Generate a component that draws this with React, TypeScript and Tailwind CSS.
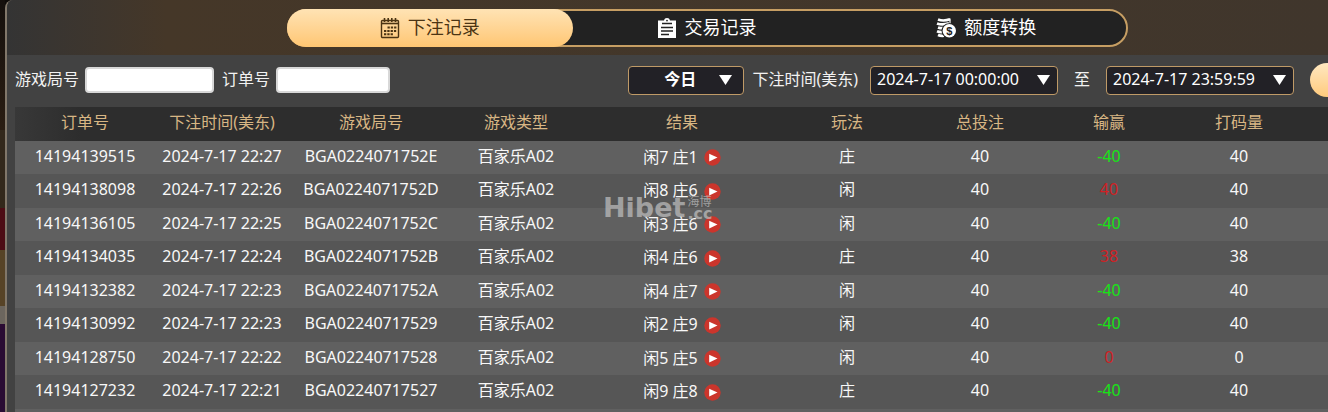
import * as React from "react"
import { clsx } from "clsx"

interface Bet {
  order: string
  time: string
  round: string
  result: string
  play: string
  stake: number
  win: number
  turnover: number
}

const bets: Bet[] = [
  { order: "14194139515", time: "2024-7-17 22:27", round: "BGA0224071752E", result: "闲7 庄1", play: "庄", stake: 40, win: -40, turnover: 40 },
  { order: "14194138098", time: "2024-7-17 22:26", round: "BGA0224071752D", result: "闲8 庄6", play: "闲", stake: 40, win: 40, turnover: 40 },
  { order: "14194136105", time: "2024-7-17 22:25", round: "BGA0224071752C", result: "闲3 庄6", play: "闲", stake: 40, win: -40, turnover: 40 },
  { order: "14194134035", time: "2024-7-17 22:24", round: "BGA0224071752B", result: "闲4 庄6", play: "庄", stake: 40, win: 38, turnover: 38 },
  { order: "14194132382", time: "2024-7-17 22:23", round: "BGA0224071752A", result: "闲4 庄7", play: "闲", stake: 40, win: -40, turnover: 40 },
  { order: "14194130992", time: "2024-7-17 22:23", round: "BGA02240717529", result: "闲2 庄9", play: "闲", stake: 40, win: -40, turnover: 40 },
  { order: "14194128750", time: "2024-7-17 22:22", round: "BGA02240717528", result: "闲5 庄5", play: "闲", stake: 40, win: 0, turnover: 0 },
  { order: "14194127232", time: "2024-7-17 22:21", round: "BGA02240717527", result: "闲9 庄8", play: "庄", stake: 40, win: -40, turnover: 40 },
]

const columns = [
  { title: "订单号", width: "w-[140px]" },
  { title: "下注时间(美东)", width: "w-[134px]" },
  { title: "游戏局号", width: "w-[164px]" },
  { title: "游戏类型", width: "w-[126px]" },
  { title: "结果", width: "w-[206px]" },
  { title: "玩法", width: "w-[124px]" },
  { title: "总投注", width: "w-[142px]" },
  { title: "输赢", width: "w-[116px]" },
  { title: "打码量", width: "w-[161px]" },
]

function CalendarIcon() {
  return (
    <svg width="20" height="22" viewBox="0 0 20 22" fill="none" aria-hidden="true">
      <rect x="1.5" y="3.5" width="17" height="17" rx="1" stroke="currentColor" strokeWidth="1.4" />
      <path d="M2 6.500h16" stroke="currentColor" strokeWidth="1.600" />
      <path d="M4.500 1v4M8.200 1v4M11.800 1v4M15.500 1v4" stroke="currentColor" strokeWidth="1.600" />
      <path d="M7.500 10.500H17M4 14h13M4 17.300h9" stroke="currentColor" strokeWidth="2" strokeDasharray="2.300 1" />
    </svg>
  )
}

function ClipboardIcon() {
  return (
    <svg width="20" height="22" viewBox="0 0 20 22" aria-hidden="true">
      <path d="M1 3.500h6C7.300 1.800 8.500 1 10 1s2.700.8 3 2.500h6V21H1z" fill="currentColor" />
      <circle cx="10" cy="3.600" r="0.900" fill="#222" />
      <path d="M5 6.500h10M4 10.500h12M4 14h12M4 17.500h8" stroke="#222" strokeWidth="1.600" />
    </svg>
  )
}

function CoinsIcon() {
  return (
    <svg width="20" height="22" viewBox="0 0 20 22" aria-hidden="true">
      <g fill="none" stroke="currentColor" strokeWidth="2.700">
        <path d="M2 2.500c3 1.200 8 1.200 12-.2" />
        <path d="M1 6.400c3 1.200 8 1.200 12-.2" />
        <path d="M2 10.400c2 .8 4 1 7 .7" />
        <path d="M1 14.200c2 .9 4 1 6 .8" />
        <path d="M2 17.900c2 .9 4 1 6 .8" />
      </g>
      <path d="M14 1.500v5" stroke="currentColor" strokeWidth="1.200" />
      <circle cx="13" cy="13.800" r="7.500" fill="#222" />
      <circle cx="13.300" cy="13.800" r="6.700" fill="currentColor" />
      <text x="13.300" y="17.900" textAnchor="middle" fontSize="11" fontWeight="700" fill="#222" fontFamily="Liberation Sans, sans-serif">
        $
      </text>
    </svg>
  )
}

function Tab({ icon, label, active }: { icon: React.ReactNode; label: string; active?: boolean }) {
  return (
    <button
      type="button"
      role="tab"
      aria-selected={!!active}
      className={clsx(
        "flex h-full items-center justify-center gap-2 rounded-full text-lg",
        active
          ? "w-[calc(100%+6px)] shrink-0 bg-linear-to-b from-[#ffe3b4] to-[#ffc672] text-[#4b3413]"
          : "flex-1 text-white"
      )}
    >
      {icon}
      <span className="pb-0.5 leading-6">{label}</span>
    </button>
  )
}

interface PickerProps {
  label: string
  value: string
  className?: string
  selectClassName?: string
  arrowClassName?: string
}

function Picker({ label, value, className, selectClassName, arrowClassName = "right-2" }: PickerProps) {
  return (
    <span className={clsx("relative block", className)}>
      <select
        aria-label={label}
        className={clsx(
          "block h-[29px] w-full appearance-none rounded-sm border border-[#bf9a67] bg-[#222126] pb-0.5 text-base leading-6 text-white",
          selectClassName
        )}
      >
        <option>{value}</option>
      </select>
      <svg
        className={clsx("pointer-events-none absolute top-[9px]", arrowClassName)}
        width="13"
        height="10"
        viewBox="0 0 13 10"
        aria-hidden="true"
      >
        <path d="M0 0h13L6.500 10z" fill="#fff" />
      </svg>
    </span>
  )
}

function PlayButton({ order }: { order: string }) {
  return (
    <button type="button" aria-label={`回放 ${order}`} className="shrink-0 pt-0.5">
      <svg width="17" height="17" viewBox="0 0 17 17" aria-hidden="true">
        <circle cx="8.500" cy="8.500" r="8.200" fill="#cb352c" />
        <path d="M5.200 4.700l8.300 3.900-8.300 3.900z" fill="#fff" />
      </svg>
    </button>
  )
}

function Watermark() {
  return (
    <div
      aria-hidden="true"
      className="pointer-events-none absolute top-[89px] left-[588px] flex items-end gap-0.5 text-[#c8c8c8] opacity-65"
    >
      <span className="font-['DejaVu_Sans'] text-[27px] leading-6 font-bold">Hibet</span>
      <span className="flex flex-col">
        <span className="font-['Liberation_Sans','Noto_Sans_CJK_SC',sans-serif] text-xs leading-3">海博</span>
        <span className="font-['DejaVu_Sans'] text-base leading-3 font-bold">.cc</span>
      </span>
    </div>
  )
}

function BetTable() {
  return (
    <table className="w-full table-fixed border-collapse text-center text-base leading-6">
      <thead>
        <tr className="h-[34px] bg-linear-to-r from-[#383838] to-[#2d2d2d] to-5% text-[#d8b684]">
          {columns.map((col) => (
            <th key={col.title} scope="col" className={clsx("pb-1 font-normal last:pr-[17px]", col.width)}>
              {col.title}
            </th>
          ))}
        </tr>
      </thead>
      <tbody className="text-[#f8f8f8]">
        {bets.map((bet) => (
          <tr key={bet.order} className="h-[33px] bg-[#606060] even:h-[34px] even:bg-[#565656] *:pb-1">
            <td>{bet.order}</td>
            <td>{bet.time}</td>
            <td>{bet.round}</td>
            <td>百家乐A02</td>
            <td>
              <div className="flex items-center justify-center gap-1.5 pt-0.5">
                <span>{bet.result}</span>
                <PlayButton order={bet.order} />
              </div>
            </td>
            <td>{bet.play}</td>
            <td>{bet.stake}</td>
            <td className={bet.win < 0 ? "text-[#16e516]" : "text-[#d01f24]"}>{bet.win}</td>
            <td className="pr-[17px]">{bet.turnover}</td>
          </tr>
        ))}
      </tbody>
    </table>
  )
}

export default function App() {
  return (
    <div className="flex min-h-screen overflow-hidden bg-[#0e0b09] font-['Noto_Sans','Noto_Sans_CJK_SC',sans-serif]">
      {/* table felt showing beside the panel */}
      <div className="flex w-[5px] shrink-0 flex-col">
        <div className="h-[130px] bg-linear-to-b from-[#15100d] to-[#2a1d12]" />
        <div className="h-[78px] bg-[#33281b]" />
        <div className="h-[42px] bg-[#4d0c14]" />
        <div className="h-[56px] bg-[#574326]" />
        <div className="h-[18px] bg-[#6c665e]" />
        <div className="flex-1 bg-[#2a0b33]" />
      </div>
      <main className="flex min-w-0 flex-1 flex-col overflow-hidden rounded-tl-lg border-l-2 border-[#81776a] bg-[#424242]">
        <header className="bg-linear-to-r from-[#343434] via-[#453728] via-12% to-[#40362c] pt-[9px] pr-[200px] pb-2 pl-[280px]">
          <div role="tablist" className="flex h-[38px] rounded-full border-2 border-[#c69e63] bg-[#222]">
            <div className="-my-0.5 -ml-0.5 flex min-w-0 flex-1">
              <Tab active icon={<CalendarIcon />} label="下注记录" />
            </div>
            <Tab icon={<ClipboardIcon />} label="交易记录" />
            <Tab icon={<CoinsIcon />} label="额度转换" />
          </div>
        </header>

        <form className="flex h-[52px] items-center pb-0.5 pl-2 text-base leading-6 whitespace-nowrap text-[#f2f2f2]">
          <label htmlFor="round" className="pb-0.5">游戏局号</label>
          <input id="round" className="mr-2 ml-1.5 h-[26px] w-[129px] rounded border-2 border-[#d8d8d8] bg-white px-1 text-black" />
          <label htmlFor="order" className="pb-0.5">订单号</label>
          <input id="order" className="ml-1.5 h-[26px] w-[114px] rounded border-2 border-[#d8d8d8] bg-white px-1 text-black" />

          <div className="ml-auto flex shrink-0 items-center">
            <Picker
              label="日期范围"
              value="今日"
              className="w-[116px]"
              selectClassName="pr-3 text-center font-bold"
              arrowClassName="right-3"
            />
            <span className="ml-2 pb-0.5">下注时间(美东)</span>
            <Picker label="开始时间" value="2024-7-17 00:00:00" className="ml-3 w-[188px]" selectClassName="pl-1.5" />
            <span className="mx-4 pb-0.5">至</span>
            <Picker label="结束时间" value="2024-7-17 23:59:59" className="w-[188px]" selectClassName="pl-1.5" />
            <button
              type="button"
              aria-label="查询"
              className="-mr-20 ml-4 h-[34px] w-[98px] rounded-full bg-linear-to-b from-[#ffe8c0] to-[#ffca7c]"
            />
          </div>
        </form>

        <section className="relative ml-2 flex-1 bg-[#606060]">
          <BetTable />
          <Watermark />
        </section>
      </main>
    </div>
  )
}
